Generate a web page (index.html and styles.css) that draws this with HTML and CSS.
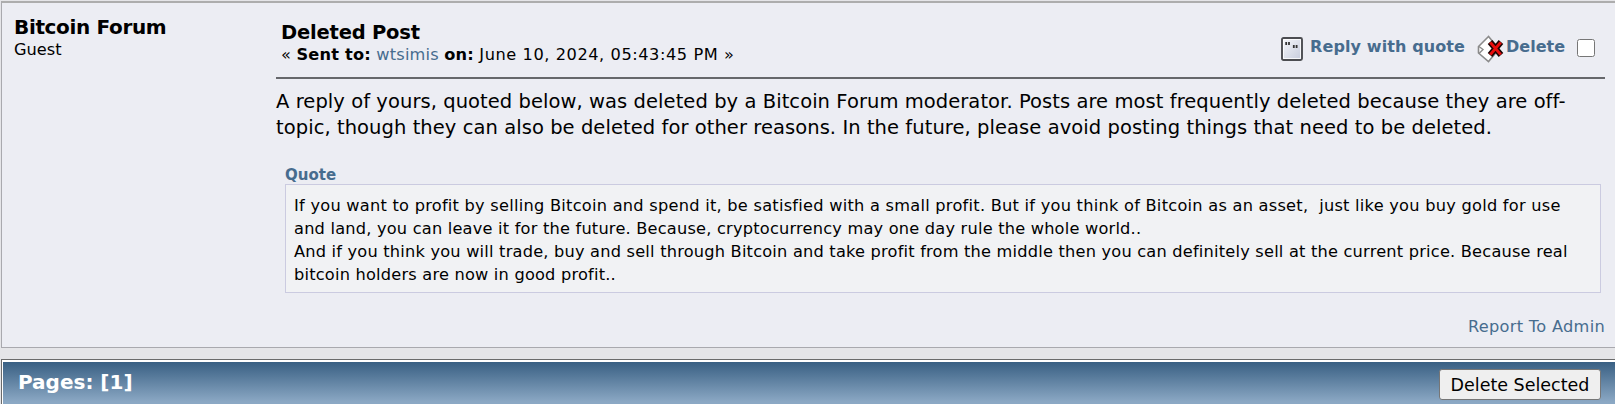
FILE: index.html
```html
<!DOCTYPE html>
<html lang="en">
<head>
    <meta charset="utf-8">
    <title>Personal Messages</title>
    <link rel="stylesheet" href="styles.css">
</head>
<body>
    <div class="message">
        <div class="poster">
            <b class="poster-name">Bitcoin Forum</b>
            <div class="smalltext">Guest</div>
        </div>
        <div class="post">
            <div class="post-header">
                <div class="post-info">
                    <b class="subject">Deleted Post</b>
                    <div class="smalltext sent">« <b>Sent to:</b> <a href="#">wtsimis</a> <b>on:</b> <span class="date">June 10, 2024, 05:43:45 PM »</span></div>
                </div>
                <div class="post-buttons">
                    <svg class="quote-icon" width="22" height="24" viewBox="0 0 22 24">
                        <defs>
                            <linearGradient id="page" x1="0" y1="0" x2="1" y2="1">
                                <stop offset="0" stop-color="#f7f8fb"/>
                                <stop offset="1" stop-color="#c5cbdc"/>
                            </linearGradient>
                        </defs>
                        <rect x="1" y="1" width="20" height="22" rx="1.5" fill="url(#page)" stroke="#4c4d51" stroke-width="1.9"/>
                        <rect x="2.6" y="2.6" width="16.8" height="18.8" fill="none" stroke="#fff" stroke-width="0.8"/>
                        <path d="M5.2 5v3M8 5v3M12.8 8v3M15.6 8v3" stroke="#333" stroke-width="1.8"/>
                    </svg>
                    <a href="#" class="button-link reply">Reply with quote</a>
                    <svg class="delete-icon" width="27" height="28" viewBox="0 0 27 28">
                        <path d="M11.5 1.5L1.5 11.5V18l10 8.500L22 14z" fill="#fff" stroke="#8b8b8b" stroke-width="1.6"/>
                        <path d="M2 11.500l4 3-4 4" fill="none" stroke="#8b8b8b" stroke-width="1.4"/>
                        <path d="M13 7l11 13M24 7L13 20" stroke="#1c0505" stroke-width="6"/>
                        <path d="M13.300 7.400l10.400 12.200M23.700 7.400L13.300 19.600" stroke="#e80c0c" stroke-width="3"/>
                    </svg>
                    <a href="#" class="button-link">Delete</a>
                    <input type="checkbox" class="check">
                </div>
            </div>
            <div class="post-body">
                A reply of yours, quoted below, was deleted by a Bitcoin Forum moderator. Posts are most frequently deleted because they are off-<br>
                topic, though they can also be deleted for other reasons. In the future, please avoid posting things that need to be deleted.
            </div>
            <div class="quote-header">Quote</div>
            <div class="quote">
                <span class="first-line">If you want to profit by selling Bitcoin and spend it, be satisfied with a small profit. But if you think of Bitcoin as an asset,&nbsp; just like you buy gold for use</span><br>
                and land, you can leave it for the future. Because, cryptocurrency may one day rule the whole world..<br>
                And if you think you will trade, buy and sell through Bitcoin and take profit from the middle then you can definitely sell at the current price. Because real<br>
                bitcoin holders are now in good profit..
            </div>
            <a href="#" class="smalltext report">Report To Admin</a>
        </div>
    </div>
    <div class="pages-bar">
        <b class="pages">Pages: [1]</b>
        <button class="delete-selected">Delete Selected</button>
    </div>
</body>
</html>
```
FILE: styles.css
```css
body {
    margin: 0;
    height: 404px;
    overflow: hidden;
    background: #e5e5e8;
    color: #000;
    font-family: Verdana, "DejaVu Sans", sans-serif;
    white-space: nowrap;
}

a {
    color: #476c8e;
    text-decoration: none;
}

.message {
    box-sizing: border-box;
    display: flex;
    height: 347px;
    margin: 1px 0 0 1px;
    border: 1px solid #a9a9ae;
    border-top: 2px solid #adadad;
    border-right: 0;
    background: #ecedf3;
}

.poster {
    width: 262px;
    padding: 12px 0 0 12px;
}

.poster-name {
    display: block;
    font-size: 20px;
    line-height: 25px;
    letter-spacing: -0.35px;
}

.smalltext {
    font-size: 16.2px;
    line-height: 20px;
}

.post {
    display: flex;
    flex-direction: column;
    width: 1329px;
}

.post-header {
    box-sizing: border-box;
    display: flex;
    justify-content: space-between;
    height: 76px;
    padding: 17px 0 0 5px;
    border-bottom: 2px solid #66676b;
}

.subject {
    display: block;
    font-size: 19.5px;
    line-height: 25px;
    letter-spacing: -0.2px;
}

.sent {
    letter-spacing: 0.2px;
}

.date {
    letter-spacing: 0.56px;
}

.post-buttons {
    display: flex;
    align-items: flex-start;
    padding: 16px 10px 0 0;
}

.quote-icon {
    margin: 1px 7px 0 0;
}

.button-link {
    margin-top: 1px;
    font-size: 16px;
    font-weight: bold;
    line-height: 20px;
}

.reply {
    letter-spacing: 0.1px;
}

.delete-icon {
    margin: -1px 2px 0 12px;
}

.check {
    width: 18px;
    height: 18px;
    margin: 3px 0 0 12px;
}

.post-body {
    margin-top: 10px;
    font-size: 19.5px;
    line-height: 26px;
    letter-spacing: 0.065px;
}

.quote-header {
    margin: 25px 0 0 9px;
    color: #476c8e;
    font-size: 15px;
    font-weight: bold;
    line-height: 18px;
}

.quote {
    box-sizing: border-box;
    height: 109px;
    margin: 0 4px 0 9px;
    padding: 9px 8px;
    border: 1px solid #cbcbe0;
    background: #f1f2f4;
    font-size: 16.2px;
    line-height: 23px;
    letter-spacing: 0.21px;
}

.first-line {
    letter-spacing: 0.255px;
}

.report {
    margin: 24px 0 0 auto;
    letter-spacing: 0.3px;
}

.pages-bar {
    box-sizing: border-box;
    display: flex;
    justify-content: space-between;
    height: 50px;
    margin: 11px 0 0 1px;
    padding: 9px 14px 0 16px;
    border: 1px solid #6b6b6b;
    border-right: 0;
    background: linear-gradient(#355c80, #8ba8c4 42px);
    box-shadow: inset 1px 2px #fff;
    color: #fff;
}

.pages {
    font-size: 20px;
    line-height: 26px;
}

.delete-selected {
    width: 162px;
    height: 31px;
    padding: 1px 0 0;
    border: 1px solid #767676;
    border-radius: 3px;
    background: #efefef;
    color: #000;
    font-family: inherit;
    font-size: 17.5px;
}
```
